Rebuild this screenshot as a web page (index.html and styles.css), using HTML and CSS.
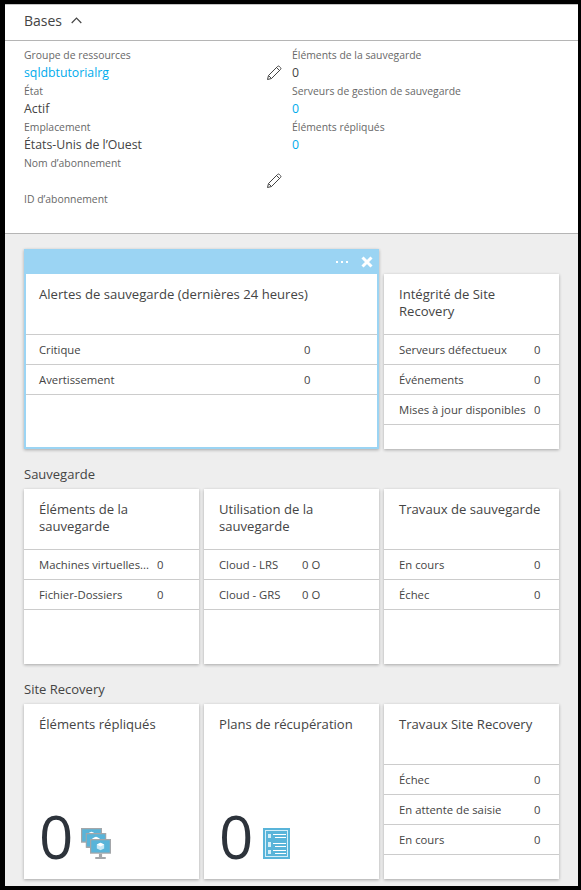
FILE: index.html
```html
<!DOCTYPE html>
<html>
	<head>
		<meta charset="utf-8">
		<title>Bases</title>
		<link rel="stylesheet" href="styles.css">
	</head>
	<body>
		<svg width="0" height="0" class="defs">
			<symbol id="pencil" viewBox="0 0 16 16">
				<path d="M1.5 14.5l1-4L11.5 1.500c.6-.6 1.300-.6 1.900 0l1.100 1.100c.6.6.6 1.300 0 1.900L5.500 13.500zM2.500 10.500l3 3M10.500 2.500l3 3" fill="none" stroke="#444" stroke-width="1"/>
			</symbol>
			<symbol id="vm" viewBox="0 0 20 19">
				<rect x="0" y="0" width="20" height="14" fill="#a3a6a9"/>
				<rect x="1.200" y="1.200" width="17.600" height="11.600" fill="#59b4d9"/>
				<path d="M10 3.500l3.500 1.700v3.800L10 10.800 6.500 9V5.200z" fill="#c9e8f5"/>
				<path d="M10 3.500l3.500 1.700L10 7 6.500 5.200z" fill="#fff"/>
				<path d="M8.500 14h3v3h-3zM5 17h10v2H5z" fill="#a3a6a9"/>
			</symbol>
		</svg>

		<div class="blade">
			<div class="essentials-head">
				<span>Bases</span>
				<svg class="chevron" width="11" height="7" viewBox="0 0 11 7"><path d="M.7 6L5.500 1.200 10.300 6" fill="none" stroke="#444" stroke-width="1.200"/></svg>
			</div>
			<div class="essentials">
				<div class="col">
					<div class="label">Groupe de ressources</div>
					<div class="value"><a href="#">sqldbtutorialrg</a><svg class="pencil"><use href="#pencil"/></svg></div>
					<div class="label">État</div>
					<div class="value">Actif</div>
					<div class="label">Emplacement</div>
					<div class="value">États-Unis de l’Ouest</div>
					<div class="label">Nom d’abonnement</div>
					<div class="value"><span></span><svg class="pencil"><use href="#pencil"/></svg></div>
					<div class="label">ID d’abonnement</div>
				</div>
				<div class="col">
					<div class="label">Éléments de la sauvegarde</div>
					<div class="value">0</div>
					<div class="label">Serveurs de gestion de sauvegarde</div>
					<div class="value"><a href="#">0</a></div>
					<div class="label">Éléments répliqués</div>
					<div class="value"><a href="#">0</a></div>
				</div>
			</div>

			<div class="board">
				<div class="grid top">
					<div class="tile selected alerts">
						<div class="select-bar">
							<span class="dots"><i></i><i></i><i></i></span>
							<svg width="12" height="12" viewBox="0 0 12 12"><path d="M1.500 1.500l9 9M10.500 1.500l-9 9" stroke="#fff" stroke-width="3"/></svg>
						</div>
						<div class="title">Alertes de sauvegarde (dernières 24 heures)</div>
						<div class="row"><span>Critique</span><span>0</span></div>
						<div class="row"><span>Avertissement</span><span>0</span></div>
					</div>
					<div class="tile right long">
						<div class="title">Intégrité de Site Recovery</div>
						<div class="row"><span>Serveurs défectueux</span><span>0</span></div>
						<div class="row"><span>Événements</span><span>0</span></div>
						<div class="row"><span>Mises à jour disponibles</span><span>0</span></div>
					</div>
				</div>

				<h2>Sauvegarde</h2>
				<div class="grid">
					<div class="tile items">
						<div class="title">Éléments de la sauvegarde</div>
						<div class="row"><span>Machines virtuelles...</span><span>0</span></div>
						<div class="row"><span>Fichier-Dossiers</span><span>0</span></div>
					</div>
					<div class="tile usage">
						<div class="title">Utilisation de la sauvegarde</div>
						<div class="row"><span>Cloud - LRS</span><span>0 O</span></div>
						<div class="row"><span>Cloud - GRS</span><span>0 O</span></div>
					</div>
					<div class="tile long">
						<div class="title">Travaux de sauvegarde</div>
						<div class="row"><span>En cours</span><span>0</span></div>
						<div class="row"><span>Échec</span><span>0</span></div>
					</div>
				</div>

				<h2>Site Recovery</h2>
				<div class="grid">
					<div class="tile">
						<div class="title">Éléments répliqués</div>
						<div class="count">
							<span>0</span>
							<svg class="stack" width="31" height="31" viewBox="0 0 31 31">
								<use href="#vm" x="0" y="0" width="21" height="20"/>
								<use href="#vm" x="4.500" y="5" width="21" height="20"/>
								<use href="#vm" x="9" y="11" width="21" height="20"/>
							</svg>
						</div>
					</div>
					<div class="tile">
						<div class="title">Plans de récupération</div>
						<div class="count">
							<span>0</span>
							<svg class="plan" width="27" height="31" viewBox="0 0 27 31">
								<rect width="27" height="31" fill="#59b4d9"/>
								<rect x="2.500" y="2.500" width="22" height="26" fill="none" stroke="#d5eef8"/>
								<path d="M10 6.500h13M12 9.500h11M10 15.500h13M12 18.500h11M10 22.500h13M12 25.500h11" stroke="#fff"/>
								<path d="M5 6h3v4H5zM5 14h3v5H5zM5 22h3v4H5z" fill="#d5eef8"/>
							</svg>
						</div>
					</div>
					<div class="tile long">
						<div class="title">Travaux Site Recovery</div>
						<div class="row"><span>Échec</span><span>0</span></div>
						<div class="row"><span>En attente de saisie</span><span>0</span></div>
						<div class="row"><span>En cours</span><span>0</span></div>
					</div>
				</div>
			</div>
		</div>
	</body>
</html>
```

FILE: styles.css
```css
html,body{
	margin:0;
	height:100%;
}
body{
	background:#000;
	padding:4px 3px 4px 5px;
	box-sizing:border-box;
	font-family:"Open Sans","Noto Sans",sans-serif;
	color:#444;
	overflow:hidden;
}
a{color:#00abec;text-decoration:none;}
.defs{position:absolute;}
.blade{
	background:#eee;
	height:100%;
	border-top:1px solid #c4c4c4;
	box-sizing:border-box;
}
.essentials-head{
	background:#fff;
	padding:0 0 5px 19px;
	box-sizing:border-box;
	height:36px;
	display:flex;
	align-items:center;
	gap:9px;
	font-size:14px;
	border-bottom:1px solid #b5b5b5;
}
.essentials{
	background:#fff;
	height:193px;
	padding:5px 0 0 19px;
	box-sizing:border-box;
	border-bottom:1px solid #b5b5b5;
	display:grid;
	grid-template-columns:258px 1fr;
	column-gap:10px;
}
.label{
	font-size:10.400px;
	line-height:18px;
	color:#686868;
}
.value{
	font-size:12.300px;
	line-height:17px;
	height:18px;
	box-sizing:border-box;
	padding-bottom:1px;
	display:flex;
	justify-content:space-between;
	align-items:center;
}
.pencil{width:16px;height:16px;flex:none;}
.board{
	padding:15px 0 0 19px;
}
.grid{
	display:grid;
	grid-template-columns:repeat(3,175px);
	grid-auto-rows:175px;
	column-gap:5px;
}
.grid.top{
	grid-template-rows:25px 175px;
}
.tile{
	background:#fff;
	box-shadow:0 1px 3px rgba(0,0,0,.3);
	position:relative;
}
.tile.selected{
	grid-column:1 / 3;
	grid-row:1 / 3;
	border:2px solid #9bd4f3;
	border-top:0;
}
.tile.right{grid-column:3;grid-row:2;}
.select-bar{
	background:#9bd4f3;
	height:25px;
	margin:0 -2px;
	display:flex;
	justify-content:flex-end;
	align-items:center;
	gap:13px;
	padding-right:6px;
}
.dots{display:flex;gap:3px;}
.dots i{width:2px;height:2px;background:#fff;display:block;}
.title{
	height:60px;
	box-sizing:border-box;
	padding:12px 15px 0;
	font-size:13.100px;
	line-height:17px;
}
.row{
	height:30px;
	box-sizing:border-box;
	border-top:1px solid #ccc;
	padding:0 0 0 15px;
	display:flex;
	align-items:center;
	font-size:11.300px;
	white-space:nowrap;
}
.row:last-child{border-bottom:1px solid #ccc;height:31px;}
.row span:first-child{flex:none;}
.long .row span:first-child{width:135px;}
.items .row span:first-child{width:118px;}
.usage .row span:first-child{width:83px;}
.alerts .row span:first-child{width:265px;}
.selected .title,.selected .row{padding-left:13px;}
.count{
	position:absolute;
	left:15px;
	bottom:13px;
	display:flex;
	align-items:flex-end;
	gap:8px;
	font-size:60px;
	font-weight:500;
	line-height:60px;
	color:#2d333b;
}
.count svg{margin-bottom:7px;}
.count .plan{margin-left:2px;}
h2{
	font-weight:normal;
	font-size:13px;
	line-height:18px;
	margin:16px 0 6px;
}
```
